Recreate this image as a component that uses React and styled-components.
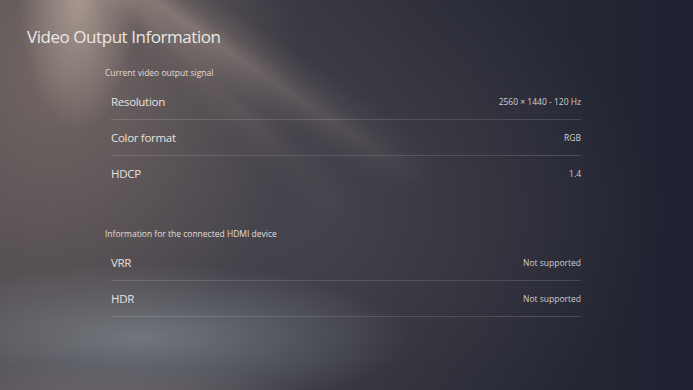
import React from "react";
import styled, { createGlobalStyle } from "styled-components";

const Global = createGlobalStyle`
  html, body { margin: 0; padding: 0; }
  body { font-family: "Open Sans", "Noto Sans", sans-serif; }
`;

const Screen = styled.div`
  position: relative;
  width: 693px;
  height: 390px;
  overflow: hidden;
  box-sizing: border-box;
  padding: 25px 0 0 0;
  display: flex;
  flex-direction: column;
  background:
    radial-gradient(ellipse 60px 140px at 78px -10px, rgba(215,195,180,0.6), rgba(215,195,180,0) 100%),
    radial-gradient(ellipse 240px 300px at 60px 70px, rgba(145,126,118,0.6), rgba(145,126,118,0) 100%),
    radial-gradient(ellipse 270px 75px at 140px 338px, rgba(135,145,152,0.65), rgba(135,145,152,0) 100%),
    radial-gradient(ellipse 220px 35px at 90px 398px, rgba(128,108,112,0.6), rgba(128,108,112,0) 100%),
    radial-gradient(ellipse 340px 260px at 320px 210px, rgba(80,77,85,0.6), rgba(80,77,85,0) 100%),
    linear-gradient(90deg, #4a464c 0%, #3e3d45 30%, #2d2e39 60%, #1e2130 100%);

  &::before {
    content: "";
    position: absolute;
    inset: 0;
    pointer-events: none;
    background:
      linear-gradient(34deg, rgba(180,160,150,0) 53%, rgba(180,160,150,0.42) 57.5%, rgba(180,160,150,0.15) 60%, rgba(180,160,150,0) 63%),
      linear-gradient(45deg, rgba(175,155,145,0) 44%, rgba(175,155,145,0.2) 48%, rgba(175,155,145,0) 53%);
    -webkit-mask-image: radial-gradient(ellipse 420px 260px at 140px 0px, #000 25%, transparent 100%);
    mask-image: radial-gradient(ellipse 420px 260px at 140px 0px, #000 25%, transparent 100%);
  }
`;

const Title = styled.h1`
  position: relative;
  margin: 0 0 16px 27px;
  font-size: 17px;
  line-height: 24px;
  font-weight: 400;
  letter-spacing: -0.45px;
  color: #ece8e4;
`;

const Content = styled.div`
  position: relative;
  margin-left: 105px;
  width: 476px;
  display: flex;
  flex-direction: column;
  gap: 34px;
`;

const Section = styled.section`
  display: flex;
  flex-direction: column;
`;

const SectionHeader = styled.div`
  font-size: 8.5px;
  line-height: 16px;
  color: #e2ddd8;
  margin-bottom: 3px;
`;

const Row = styled.div`
  margin-left: 6px;
  height: 36px;
  box-sizing: border-box;
  display: flex;
  align-items: center;
  justify-content: space-between;
  border-bottom: 1px solid ${(p) => (p.$divider ? "rgba(255,255,255,0.14)" : "transparent")};
`;

const Label = styled.span`
  font-size: 11.5px;
  letter-spacing: -0.3px;
  color: #e6e2de;
`;

const Value = styled.span`
  font-size: 8.5px;
  color: #cfcfd2;
`;

const sections = [
  {
    header: "Current video output signal",
    lastDivider: false,
    rows: [
      ["Resolution", "2560 × 1440 - 120 Hz"],
      ["Color format", "RGB"],
      ["HDCP", "1.4"],
    ],
  },
  {
    header: "Information for the connected HDMI device",
    lastDivider: true,
    rows: [
      ["VRR", "Not supported"],
      ["HDR", "Not supported"],
    ],
  },
];

export default function App() {
  return (
    <>
      <Global />
      <Screen>
        <Title>Video Output Information</Title>
        <Content>
          {sections.map((s) => (
            <Section key={s.header}>
              <SectionHeader>{s.header}</SectionHeader>
              {s.rows.map(([l, v], i) => (
                <Row key={l} $divider={i < s.rows.length - 1 || s.lastDivider}>
                  <Label>{l}</Label>
                  <Value>{v}</Value>
                </Row>
              ))}
            </Section>
          ))}
        </Content>
      </Screen>
    </>
  );
}
